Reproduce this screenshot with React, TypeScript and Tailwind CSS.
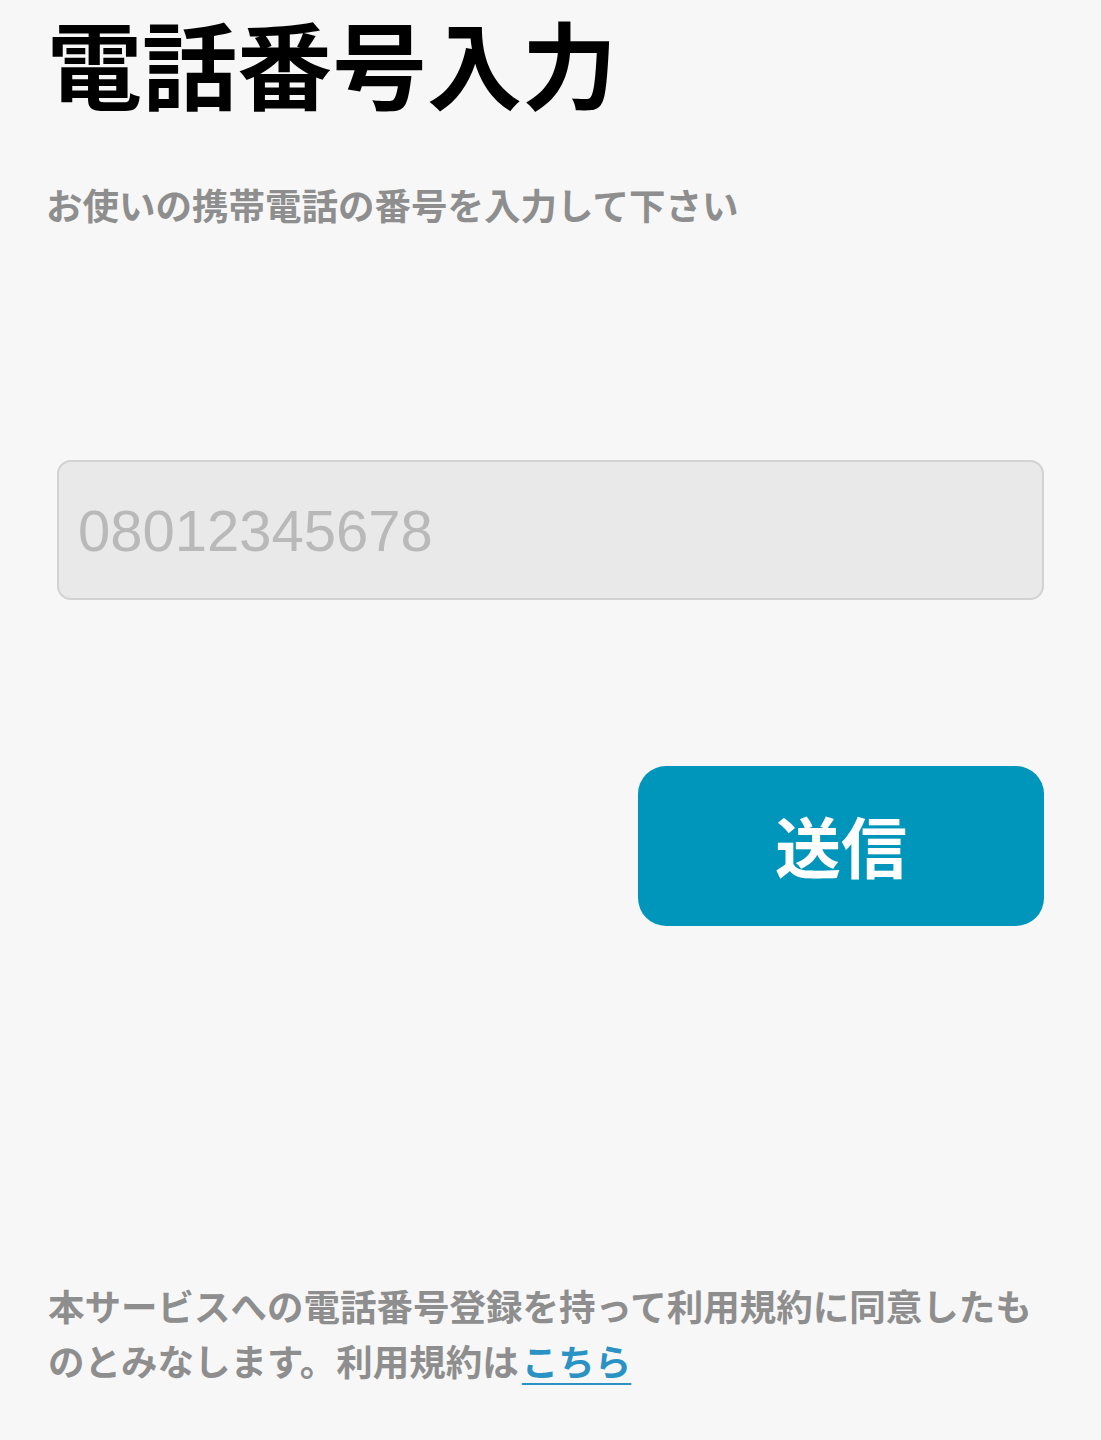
import React from "react";

const jp = { fontFamily: '"Noto Sans CJK JP", "Noto Sans", sans-serif' };

export default function App() {
  return (
    <div className="min-h-[1440px] w-full bg-[#f7f7f7] px-[48px] pt-[7px]" style={jp}>
      <div className="flex flex-col">
        <h1 className="-ml-[1px] text-[95px] leading-[110px] font-bold text-black">電話番号入力</h1>

        <p className="-ml-[2px] mt-[70px] text-[36.5px] leading-[36px] font-bold text-[#8e8e8e]">
          お使いの携帯電話の番号を入力して下さい
        </p>

        <div className="mx-[9px] mt-[237px] h-[140px] rounded-[14px] border-2 border-[#d2d2d2] bg-[#e9e9e9] flex items-center px-[19px]">
          <input
            type="tel"
            placeholder="08012345678"
            className="w-full bg-transparent outline-none text-[58px] text-[#333] placeholder:text-[#b9b9b9]"
            style={{ fontFamily: '"Liberation Sans", Arial, sans-serif' }}
          />
        </div>

        <div className="mt-[166px] mr-[9px] flex justify-end">
          <button className="w-[406px] h-[160px] rounded-[28px] bg-[#0095bb] text-white text-[66px] font-bold leading-none flex items-center justify-center pb-[4px]">
            送信
          </button>
        </div>

        <p className="mt-[352px] text-[36.5px] leading-[55px] font-bold text-[#8e8e8e]">
          本サービスへの電話番号登録を持って利用規約に同意したものとみなします。利用規約は
          <a href="#" className="ml-[3px] text-[#2a93c3] underline decoration-2 underline-offset-[7px]">
            こちら
          </a>
        </p>
      </div>
    </div>
  );
}
